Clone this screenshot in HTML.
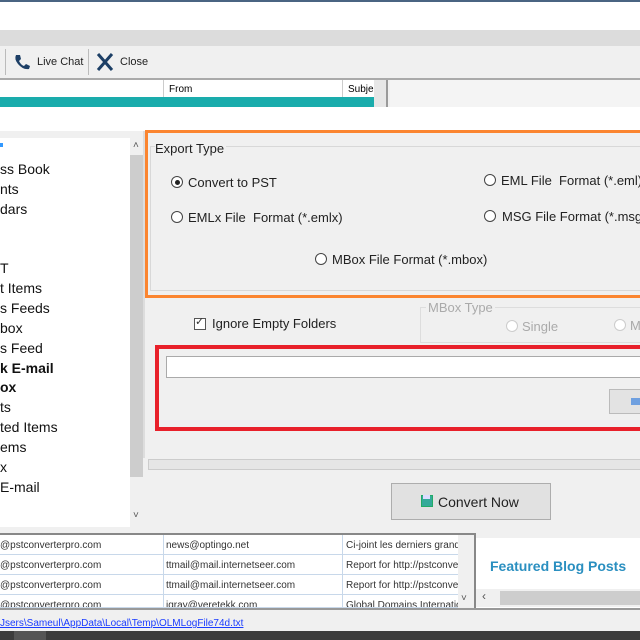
<!DOCTYPE html>
<html><head><style>
*{margin:0;padding:0;box-sizing:border-box}
body{width:640px;height:640px;overflow:hidden;background:#f0f0f0;font-family:"Liberation Sans",Arial,sans-serif;position:relative}
.a{position:absolute}
.t{position:absolute;white-space:nowrap}
.radio{position:absolute;width:12px;height:12px;border:1px solid #444;border-radius:50%;background:#fff}
.tree div{position:absolute;left:0;font-size:14px;color:#111;white-space:nowrap}
.row{position:absolute;left:0;width:458px;height:20px;border-bottom:1px solid #c8d8ea;font-size:10px;color:#333;overflow:hidden}
.row span{position:absolute;top:5px;white-space:nowrap;overflow:hidden}
</style></head><body>
<div class="a" style="left:0;top:0;width:640px;height:2px;background:#4a6482"></div>
<div class="a" style="left:0;top:2px;width:640px;height:28px;background:#fff"></div>
<div class="a" style="left:0;top:30px;width:640px;height:16px;background:#dcdcdc"></div>
<div class="a" style="left:0;top:46px;width:640px;height:32px;background:#f0f0f0"></div>
<div class="a" style="left:5px;top:49px;width:1px;height:26px;background:#bbb"></div>
<svg class="a" style="left:13px;top:53px" width="18" height="18" viewBox="0 0 18 18"><path d="M3 2 L7 2 L8 6 L6 8 Q8 12 11 13 L13 11 L17 13 L16 16 Q10 17 5 11 Q1 6 3 2Z" fill="#1d3f66"/></svg>
<div class="t" style="left:37px;top:56px;font-size:11px;color:#222">Live Chat</div>
<div class="a" style="left:88px;top:49px;width:1px;height:26px;background:#bbb"></div>
<svg class="a" style="left:95px;top:52px" width="20" height="20" viewBox="0 0 20 20"><path d="M3 2 L17 18 M17 2 L3 18" stroke="#1d3f66" stroke-width="3"/></svg>
<div class="t" style="left:120px;top:56px;font-size:11px;color:#222">Close</div>
<div class="a" style="left:0;top:78px;width:640px;height:2px;background:#aaa"></div>
<div class="a" style="left:0;top:80px;width:374px;height:17px;background:#fff"></div>
<div class="t" style="left:169px;top:84px;font-size:10px">From</div>
<div class="t" style="left:348px;top:84px;font-size:10px">Subject</div>
<div class="a" style="left:163px;top:80px;width:1px;height:27px;background:#ccc"></div>
<div class="a" style="left:342px;top:80px;width:1px;height:27px;background:#ccc"></div>
<div class="a" style="left:0;top:97px;width:374px;height:10px;background:#1aacac"></div>
<div class="a" style="left:374px;top:80px;width:12px;height:27px;background:#e6e6e6"></div>
<div class="a" style="left:386px;top:80px;width:2px;height:27px;background:#999"></div>
<div class="a" style="left:390px;top:80px;width:250px;height:27px;background:#f4f4f4"></div>
<div class="a" style="left:0;top:107px;width:640px;height:24px;background:#fff"></div>
<div class="a" style="left:0;top:131px;width:640px;height:402px;background:#f0f0f0"></div>
<div class="a" style="left:0;top:138px;width:130px;height:389px;background:#fff"></div>
<div class="a" style="left:130px;top:138px;width:13px;height:389px;background:#f0f0f0"></div>
<div class="a" style="left:130px;top:155px;width:13px;height:322px;background:#cdcdcd"></div>
<div class="t" style="left:133px;top:140px;font-size:10px;color:#555">˄</div>
<div class="t" style="left:133px;top:510px;font-size:10px;color:#555">˅</div>
<div class="a" style="left:0;top:143px;width:3px;height:4px;background:#39f"></div>
<div class="tree">
<div style="top:161px">ss Book</div>
<div style="top:181px">nts</div>
<div style="top:201px">dars</div>
<div style="top:260px">T</div>
<div style="top:280px">t Items</div>
<div style="top:300px">s Feeds</div>
<div style="top:320px">box</div>
<div style="top:340px">s Feed</div>
<div style="top:360px;font-weight:bold">k E-mail</div>
<div style="top:379px;font-weight:bold">ox</div>
<div style="top:399px">ts</div>
<div style="top:419px">ted Items</div>
<div style="top:439px">ems</div>
<div style="top:459px">x</div>
<div style="top:479px">E-mail</div>
</div>
<div class="a" style="left:143px;top:131px;width:2px;height:327px;background:#ddd"></div>
<div class="a" style="left:145px;top:130px;width:500px;height:168px;border:3px solid #fb8530"></div>
<div class="a" style="left:150px;top:146px;width:495px;height:145px;border:1px solid #d8d8d8"></div>
<div class="t" style="left:155px;top:141px;font-size:13px;color:#222;background:#f0f0f0;padding-right:2px">Export Type</div>
<div class="radio" style="left:171px;top:176px"></div><div class="a" style="left:175px;top:180px;width:5px;height:5px;border-radius:50%;background:#222"></div>
<div class="t" style="left:188px;top:175px;font-size:13px;color:#222">Convert to PST</div>
<div class="radio" style="left:484px;top:174px"></div>
<div class="t" style="left:501px;top:173px;font-size:13px;color:#222">EML File&nbsp; Format (*.eml)</div>
<div class="radio" style="left:171px;top:211px"></div>
<div class="t" style="left:188px;top:210px;font-size:13px;color:#222">EMLx File&nbsp; Format (*.emlx)</div>
<div class="radio" style="left:484px;top:210px"></div>
<div class="t" style="left:502px;top:209px;font-size:13px;color:#222">MSG File Format (*.msg)</div>
<div class="radio" style="left:315px;top:253px"></div>
<div class="t" style="left:332px;top:252px;font-size:13px;color:#222">MBox File Format (*.mbox)</div>
<div class="a" style="left:194px;top:318px;width:12px;height:12px;border:1px solid #555;background:#fff"></div>
<div class="t" style="left:195px;top:315px;font-size:11px;color:#333">✓</div>
<div class="t" style="left:212px;top:316px;font-size:13px;color:#222">Ignore Empty Folders</div>
<div class="a" style="left:420px;top:307px;width:230px;height:36px;border:1px solid #ddd"></div>
<div class="t" style="left:426px;top:300px;font-size:13px;color:#aaa;background:#f0f0f0;padding:0 2px">MBox Type</div>
<div class="radio" style="left:506px;top:320px;border-color:#ccc"></div>
<div class="t" style="left:522px;top:319px;font-size:13px;color:#aaa">Single</div>
<div class="radio" style="left:614px;top:319px;border-color:#ccc"></div>
<div class="t" style="left:630px;top:318px;font-size:13px;color:#aaa">M</div>
<div class="a" style="left:155px;top:345px;width:500px;height:86px;border:4px solid #e8202a"></div>
<div class="a" style="left:166px;top:356px;width:480px;height:22px;border:1px solid #aaa;background:#fff"></div>
<div class="a" style="left:609px;top:389px;width:40px;height:25px;border:1px solid #bbb;background:#e3e3e3"></div>
<div class="a" style="left:631px;top:398px;width:9px;height:7px;background:#6fa0e0"></div>
<div class="a" style="left:148px;top:459px;width:500px;height:11px;border:1px solid #ccc;background:#e6e6e6"></div>
<div class="a" style="left:391px;top:483px;width:160px;height:37px;border:1px solid #adadad;background:#e1e1e1"></div>
<div class="a" style="left:421px;top:495px;width:12px;height:12px;background:#3a9;border:1px solid #2a6"></div>
<div class="a" style="left:423px;top:495px;width:7px;height:4px;background:#ddf"></div>
<div class="t" style="left:438px;top:494px;font-size:14px;color:#222">Convert Now</div>
<div class="a" style="left:0;top:533px;width:474px;height:75px;background:#fff;border-top:2px solid #888"></div>
<div class="row" style="top:535px"><span style="left:0">@pstconverterpro.com</span><span style="left:166px">news@optingo.net</span><span style="left:346px;width:112px">Ci-joint les derniers grands</span></div>
<div class="row" style="top:555px"><span style="left:0">@pstconverterpro.com</span><span style="left:166px">ttmail@mail.internetseer.com</span><span style="left:346px;width:112px">Report for http://pstconve</span></div>
<div class="row" style="top:575px"><span style="left:0">@pstconverterpro.com</span><span style="left:166px">ttmail@mail.internetseer.com</span><span style="left:346px;width:112px">Report for http://pstconve</span></div>
<div class="row" style="top:595px;height:13px"><span style="left:0">@pstconverterpro.com</span><span style="left:166px">igray@veretekk.com</span><span style="left:346px;width:112px">Global Domains Internation</span></div>
<div class="a" style="left:163px;top:535px;width:1px;height:73px;background:#c8d8ea"></div>
<div class="a" style="left:342px;top:535px;width:1px;height:73px;background:#c8d8ea"></div>
<div class="a" style="left:458px;top:535px;width:16px;height:73px;background:#f0f0f0"></div>
<div class="t" style="left:461px;top:593px;font-size:10px;color:#555">˅</div>
<div class="a" style="left:474px;top:533px;width:2px;height:75px;background:#888"></div>
<div class="a" style="left:476px;top:535px;width:164px;height:73px;background:#fff"></div>
<div class="a" style="left:476px;top:535px;width:164px;height:3px;background:#f0f0f0"></div>
<div class="t" style="left:490px;top:558px;font-size:14px;font-weight:bold;color:#2a8fc0">Featured Blog Posts</div>
<div class="a" style="left:476px;top:589px;width:164px;height:18px;background:#f0f0f0"></div>
<div class="a" style="left:500px;top:591px;width:140px;height:14px;background:#cdcdcd"></div>
<div class="t" style="left:482px;top:589px;font-size:12px;color:#555">‹</div>
<div class="a" style="left:0;top:608px;width:640px;height:2px;background:#999"></div>
<div class="a" style="left:0;top:610px;width:640px;height:22px;background:#f0f0f0"></div>
<div class="t" style="left:0;top:618px;font-size:10px;color:#1a3cff;text-decoration:underline">Jsers\Sameul\AppData\Local\Temp\OLMLogFile74d.txt</div>
<div class="a" style="left:0;top:631px;width:640px;height:9px;background:#3c3c3c"></div>
<div class="a" style="left:14px;top:631px;width:32px;height:9px;background:#555"></div>
</body></html>
